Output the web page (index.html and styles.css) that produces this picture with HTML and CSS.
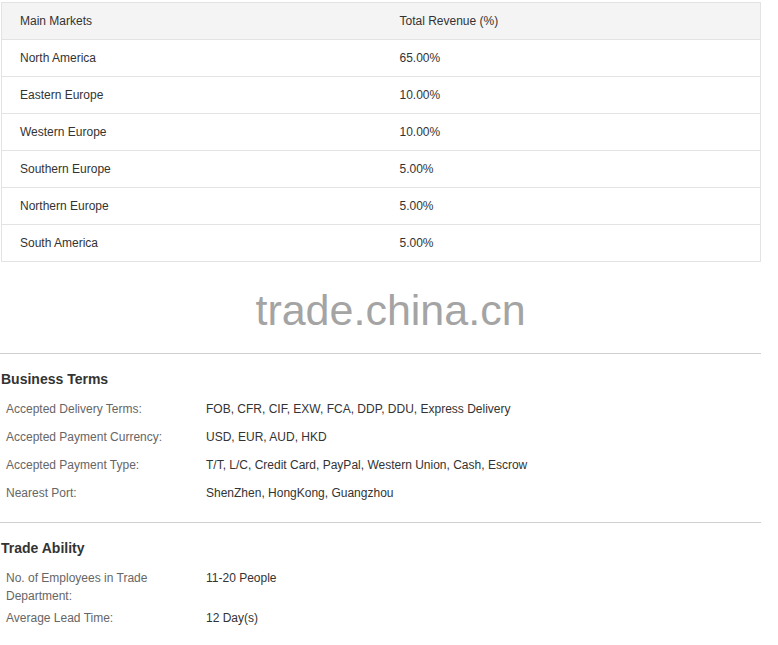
FILE: index.html
```html
<!DOCTYPE html>
<html>
<head>
<meta charset="utf-8">
<link rel="stylesheet" href="styles.css">
</head>
<body>
<div class="page">
  <table class="markets">
    <thead>
      <tr><th>Main Markets</th><th>Total Revenue (%)</th></tr>
    </thead>
    <tbody>
      <tr><td>North America</td><td>65.00%</td></tr>
      <tr><td>Eastern Europe</td><td>10.00%</td></tr>
      <tr><td>Western Europe</td><td>10.00%</td></tr>
      <tr><td>Southern Europe</td><td>5.00%</td></tr>
      <tr><td>Northern Europe</td><td>5.00%</td></tr>
      <tr><td>South America</td><td>5.00%</td></tr>
    </tbody>
  </table>

  <div class="watermark">trade.china.cn</div>

  <section class="block">
    <h2 class="block-title">Business Terms</h2>
    <div class="row"><div class="label">Accepted Delivery Terms:</div><div class="value">FOB, CFR, CIF, EXW, FCA, DDP, DDU, Express Delivery</div></div>
    <div class="row"><div class="label">Accepted Payment Currency:</div><div class="value">USD, EUR, AUD, HKD</div></div>
    <div class="row"><div class="label">Accepted Payment Type:</div><div class="value">T/T, L/C, Credit Card, PayPal, Western Union, Cash, Escrow</div></div>
    <div class="row"><div class="label">Nearest Port:</div><div class="value">ShenZhen, HongKong, Guangzhou</div></div>
  </section>

  <section class="block">
    <h2 class="block-title">Trade Ability</h2>
    <div class="row"><div class="label">No. of Employees in Trade Department:</div><div class="value">11-20 People</div></div>
    <div class="row"><div class="label">Average Lead Time:</div><div class="value">12 Day(s)</div></div>
  </section>
</div>
</body>
</html>
```

FILE: styles.css
```css
* { box-sizing: border-box; }
body {
  margin: 0;
  background: #fff;
  font-family: "Liberation Sans", Arial, sans-serif;
  font-size: 12px;
  color: #333;
}
.page {
  width: 761px;
  padding-top: 2px;
}
.markets {
  margin-left: 1px;
  width: 760px;
  border-collapse: collapse;
  border: 1px solid #e3e3e3;
  table-layout: fixed;
}
.markets th,
.markets td {
  height: 37px;
  padding: 0 0 1px 18px;
  text-align: left;
  font-weight: normal;
  color: #333;
  border-bottom: 1px solid #e3e3e3;
  vertical-align: middle;
}
.markets th:first-child,
.markets td:first-child { width: 379px; }
.markets th:last-child,
.markets td:last-child { padding-left: 19px; }
.markets thead th { background: #f4f4f4; }
.watermark {
  height: 92px;
  text-align: center;
  font-size: 43px;
  line-height: 1;
  color: #a4a4a4;
  padding-top: 27px;
  padding-left: 20px;
  border-bottom: 1px solid #cfcfcf;
}
.block {
  padding-top: 15px;
  padding-bottom: 12px;
  border-bottom: 1px solid #cfcfcf;
}
.block:last-child { border-bottom: none; }
.block-title {
  margin: 0 0 9px 1px;
  font-size: 14px;
  line-height: 20px;
  font-weight: bold;
  color: #333;
}
.row {
  display: flex;
  align-items: flex-start;
  min-height: 28px;
  padding: 2px 0;
  line-height: 18px;
}
.label {
  flex: 0 0 206px;
  padding-left: 6px;
  padding-right: 20px;
  color: #666;
}
.value {
  flex: 1;
  color: #333;
}
```
